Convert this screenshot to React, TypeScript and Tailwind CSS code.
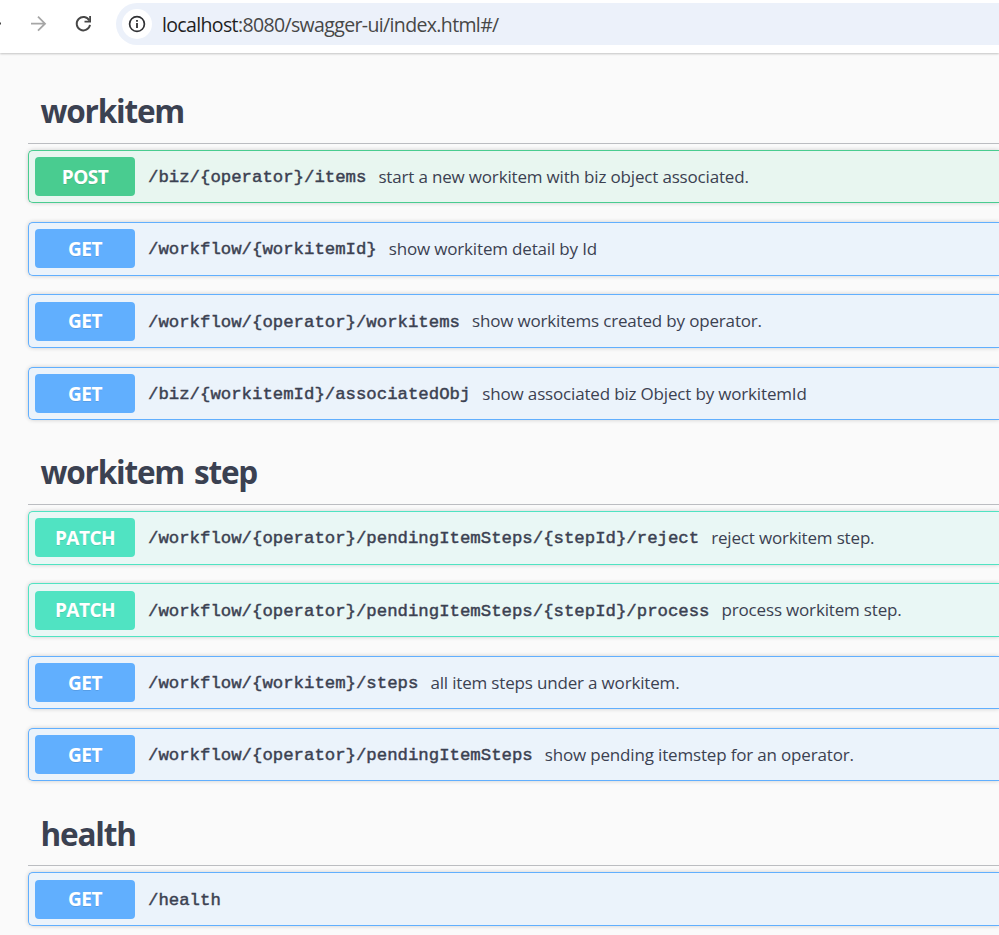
type Method = "POST" | "GET" | "PATCH";

interface Operation {
  method: Method;
  path: string;
  summary: string;
}

interface Tag {
  name: string;
  operations: Operation[];
}

const tags: Tag[] = [
  {
    name: "workitem",
    operations: [
      { method: "POST", path: "/biz/{operator}/items", summary: "start a new workitem with biz object associated." },
      { method: "GET", path: "/workflow/{workitemId}", summary: "show workitem detail by Id" },
      { method: "GET", path: "/workflow/{operator}/workitems", summary: "show workitems created by operator." },
      { method: "GET", path: "/biz/{workitemId}/associatedObj", summary: "show associated biz Object by workitemId" },
    ],
  },
  {
    name: "workitem step",
    operations: [
      { method: "PATCH", path: "/workflow/{operator}/pendingItemSteps/{stepId}/reject", summary: "reject workitem step." },
      { method: "PATCH", path: "/workflow/{operator}/pendingItemSteps/{stepId}/process", summary: "process workitem step." },
      { method: "GET", path: "/workflow/{workitem}/steps", summary: "all item steps under a workitem." },
      { method: "GET", path: "/workflow/{operator}/pendingItemSteps", summary: "show pending itemstep for an operator." },
    ],
  },
  {
    name: "health",
    operations: [{ method: "GET", path: "/health", summary: "" }],
  },
];

const rowStyle: Record<Method, string> = {
  POST: "border-[#49cc90] bg-[#e8f6f0]",
  GET: "border-[#61affe] bg-[#ebf3fb]",
  PATCH: "border-[#50e3c2] bg-[#e9f7f5]",
};

const badgeStyle: Record<Method, string> = {
  POST: "bg-[#49cc90]",
  GET: "bg-[#61affe]",
  PATCH: "bg-[#50e3c2]",
};

function Toolbar() {
  return (
    <header className="flex h-[53px] shrink-0 items-start bg-white pt-[3px] shadow-[0_1px_2px_rgba(0,0,0,0.22)]">
      <div className="flex h-[42px] w-[116px] shrink-0 items-center">
        <svg width="116" height="42" viewBox="0 0 116 42" fill="none">
          <path d="M-14 20.500H1" stroke="#474747" strokeWidth="1.8" />
          <path d="M31 20.700H45M38 13.700l7 7-7 7" stroke="#a6a6a6" strokeWidth="1.8" />
          <path d="M89.300 17.500A6.700 6.700 0 1 0 90 21.900" stroke="#474747" strokeWidth="1.9" />
          <path d="M91 13v6.500H84.500V17.700H89.200V13Z" fill="#474747" />
        </svg>
      </div>
      <div className="flex h-[42px] flex-1 items-center rounded-l-full bg-[#ecf1fa] pl-[6px]">
        <div className="flex size-[30px] items-center justify-center rounded-full bg-white">
          <svg width="18" height="18" viewBox="0 0 18 18" fill="none">
            <circle cx="9" cy="9" r="7.400" stroke="#303134" strokeWidth="1.7" />
            <path d="M9 8v5" stroke="#303134" strokeWidth="1.8" />
            <path d="M9 5v1.800" stroke="#303134" strokeWidth="1.8" />
          </svg>
        </div>
        <div className="ml-[10px] whitespace-nowrap pt-px text-[19.5px] tracking-[-0.64px] text-[#474747]">
          <span className="text-[#1f1f1f]">localhost</span>:8080/swagger-ui/index.html#/
        </div>
      </div>
    </header>
  );
}

function OperationRow({ method, path, summary }: Operation) {
  return (
    <div
      className={`mb-[18.75px] flex h-[53.5px] items-center rounded-l-[5px] border border-r-0 pl-[6px] shadow-[0_0_4px_rgba(0,0,0,0.19)] ${rowStyle[method]}`}
    >
      <span
        className={`flex h-[39px] w-[100px] shrink-0 items-center justify-center rounded-[4px] pt-px text-[19px] font-bold tracking-[-0.5px] text-white [text-shadow:0_1px_0_rgba(0,0,0,0.1)] ${badgeStyle[method]}`}
      >
        {method}
      </span>
      <span className="ml-[13px] whitespace-nowrap pt-[3px] font-['Liberation_Mono',monospace] text-[17.333px] [-webkit-text-stroke:0.45px_#3b4151]">
        {path}
      </span>
      <span className="ml-[12px] whitespace-nowrap text-[17px] tracking-[-0.17px]">{summary}</span>
    </div>
  );
}

export default function App() {
  return (
    <div className="flex h-[935px] w-full flex-col overflow-hidden bg-[#fafafa] font-['Open_Sans','Noto_Sans',sans-serif] text-[#3b4151]">
      <Toolbar />
      <main className="pl-[28px] pt-[24.65px]">
        {tags.map((tag) => (
          <section key={tag.name}>
            <h3 className="mb-[6px] flex h-[66.25px] items-center border-b border-[#bbbdc1] pl-[12.5px] pt-px text-[31.5px] font-bold tracking-[-1.2px] [word-spacing:3px]">
              {tag.name}
            </h3>
            {tag.operations.map((op) => (
              <OperationRow key={op.path} {...op} />
            ))}
          </section>
        ))}
      </main>
    </div>
  );
}
